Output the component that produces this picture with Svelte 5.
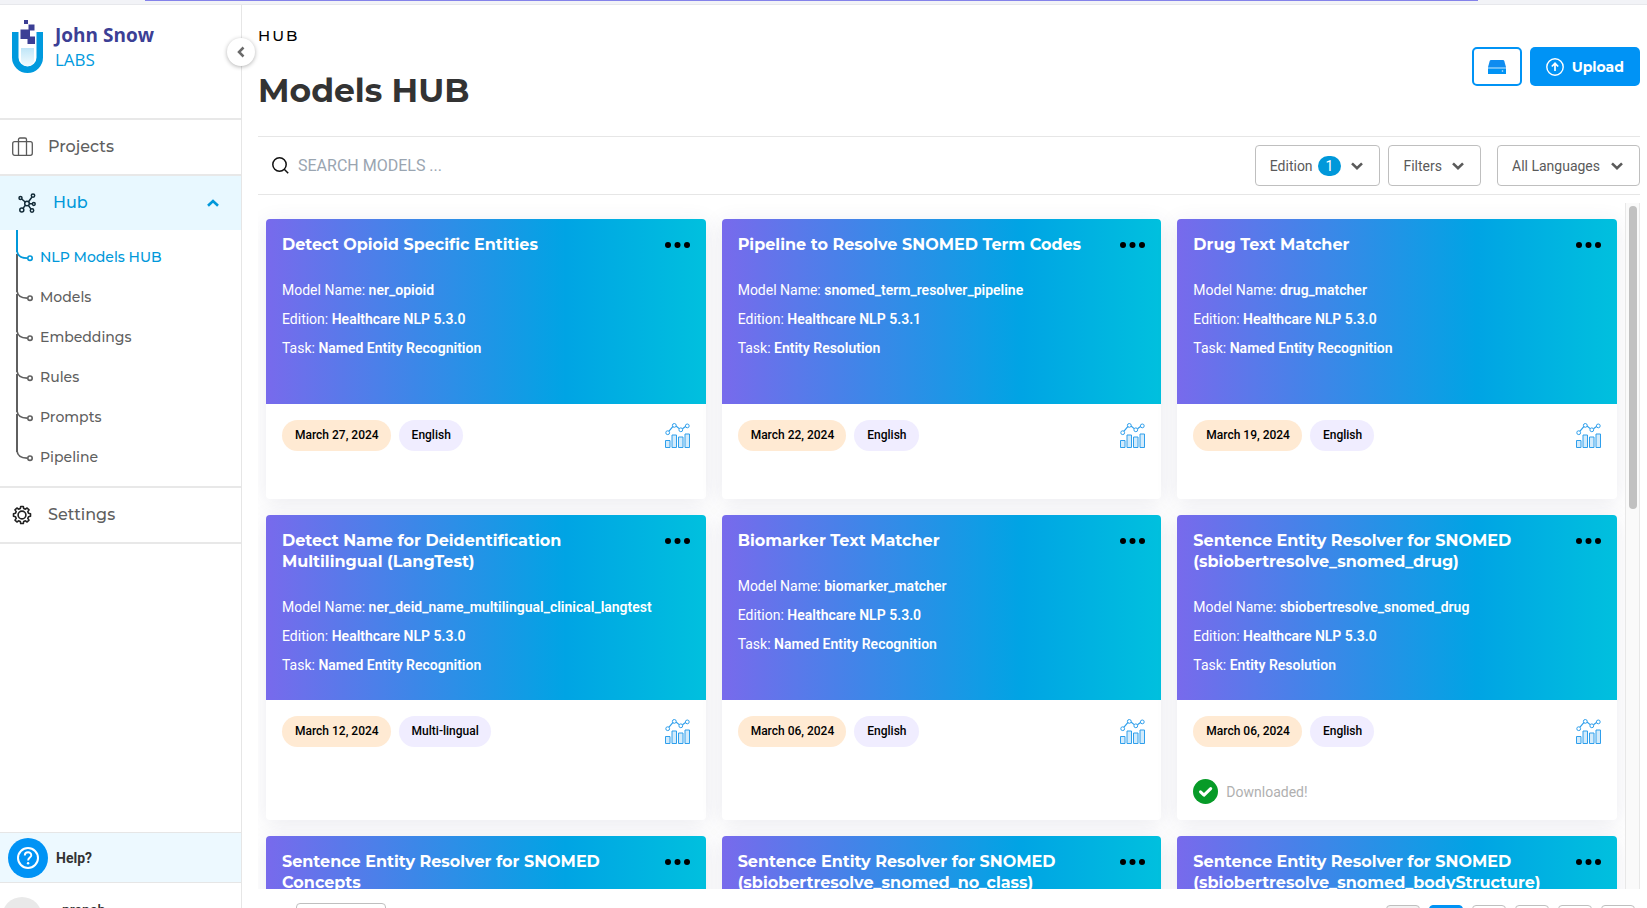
<script>
  const subItems = ['NLP Models HUB', 'Models', 'Embeddings', 'Rules', 'Prompts', 'Pipeline'];
  const NER = 'Named Entity Recognition';
  const cards = [
    { title: 'Detect Opioid Specific Entities', name: 'ner_opioid', edition: 'Healthcare NLP 5.3.0', task: NER, date: 'March 27, 2024', lang: 'English' },
    { title: 'Pipeline to Resolve SNOMED Term Codes', name: 'snomed_term_resolver_pipeline', edition: 'Healthcare NLP 5.3.1', task: 'Entity Resolution', date: 'March 22, 2024', lang: 'English' },
    { title: 'Drug Text Matcher', name: 'drug_matcher', edition: 'Healthcare NLP 5.3.0', task: NER, date: 'March 19, 2024', lang: 'English' },
    { title: 'Detect Name for Deidentification Multilingual (LangTest)', name: 'ner_deid_name_multilingual_clinical_langtest', edition: 'Healthcare NLP 5.3.0', task: NER, date: 'March 12, 2024', lang: 'Multi-lingual' },
    { title: 'Biomarker Text Matcher', name: 'biomarker_matcher', edition: 'Healthcare NLP 5.3.0', task: NER, date: 'March 06, 2024', lang: 'English' },
    { title: 'Sentence Entity Resolver for SNOMED (sbiobertresolve_snomed_drug)', name: 'sbiobertresolve_snomed_drug', edition: 'Healthcare NLP 5.3.0', task: 'Entity Resolution', date: 'March 06, 2024', lang: 'English', downloaded: true },
    { title: 'Sentence Entity Resolver for SNOMED Concepts' },
    { title: 'Sentence Entity Resolver for SNOMED (sbiobertresolve_snomed_no_class)' },
    { title: 'Sentence Entity Resolver for SNOMED (sbiobertresolve_snomed_bodyStructure)' }
  ];
  const pages = [1, 2, 3, 4, 5, 6];
</script>

{#snippet chevron()}
  <svg class="chev" width="12" height="8" viewBox="0 0 12 8" fill="none" stroke="currentColor" stroke-width="2.600" aria-hidden="true"><path d="M1 1.400 6 6.200l5-4.800" /></svg>
{/snippet}

<div class="page">
  <div class="strip"><div class="progress"></div></div>
  <div class="shell">
    <aside>
      <div class="brand">
        <svg width="31" height="54" viewBox="0 0 31 54" aria-hidden="true">
          <defs><linearGradient id="liquid" x1="0" y1="0" x2="0" y2="1"><stop offset="0" stop-color="#bfe6f8" /><stop offset="1" stop-color="#f4fbfe" /></linearGradient></defs>
          <path d="M0 12h6.500v25.500a9 9 0 0 0 18 0V12H31v25.500a15.500 15.500 0 0 1-31 0z" fill="#009ade" />
          <path d="M9 28h13v11.500c0 4-3 6.500-6.500 6.500S9 43.500 9 39.500z" fill="url(#liquid)" />
          <g fill="#3c3f95"><path d="M12 0h4v4h-4zM16.500 4.500h6v6h-6zM8.500 9.500H18v9.500H8.500zM15.500 16.500H23V24h-7.500z" /></g>
        </svg>
        <div class="wordmark"><strong>John Snow</strong><span>LABS</span></div>
      </div>
      <button class="collapse" aria-label="Collapse sidebar">
        <svg width="8" height="12" viewBox="0 0 8 12" fill="none" stroke="#6a6a6a" stroke-width="2.500"><path d="M6.500 1.500 2 6l4.500 4.500" /></svg>
      </button>
      <nav>
        <a class="item" href="#projects">
          <svg width="21" height="20" viewBox="0 0 21 20" fill="none" stroke="#5a5a5a" stroke-width="1.300" aria-hidden="true"><rect x=".7" y="4.700" width="19.600" height="13.600" rx="2" /><path d="M6.500 18V2.500A1.500 1.500 0 0 1 8 1h5a1.500 1.500 0 0 1 1.500 1.500V18" /></svg>
          <span>Projects</span>
        </a>
        <a class="item active" href="#hub">
          <svg width="18" height="20" viewBox="0 0 18 20" fill="none" stroke="#122b38" stroke-width="1.500" aria-hidden="true">
            <circle cx="9" cy="10.500" r="2.300" /><circle cx="2.500" cy="5" r="1.500" /><circle cx="15" cy="2.600" r="1.700" /><circle cx="15.800" cy="11" r="1.400" /><circle cx="3.800" cy="17" r="2" /><circle cx="14" cy="17.500" r="1.700" />
            <path d="M3.700 6 7.200 9M14 4l-3.500 4.700M11.300 10.700h3M7.400 12.200 5 15.400M10.400 12.400l2.600 3.700" />
          </svg>
          <span>Hub</span>
          <svg class="up" width="12" height="8" viewBox="0 0 12 8" fill="none" stroke="#0098da" stroke-width="2.600" aria-hidden="true"><path d="M1 6.800 6 2l5 4.800" /></svg>
        </a>
        <ul>
          {#each subItems as item, i}
            <li class:current={i === 0}>
              <svg width="17" height="40" viewBox="0 0 17 40" fill="none" stroke="currentColor" aria-hidden="true">
                {#if i < subItems.length - 1}<path stroke="#5f5f5f" stroke-width="2" d="M1 24V40" />{/if}
                <path stroke-width="2" d="M1 0V22" /><path stroke-width="1.700" d="M1 21c.5 4 3 7 10 7.200" /><circle cx="14" cy="28.200" r="2.200" stroke-width="1.600" />
              </svg>
              <a href="#{item}">{item}</a>
            </li>
          {/each}
        </ul>
        <a class="item settings" href="#settings">
          <svg width="22" height="22" viewBox="0 0 22 22" fill="none" stroke="#222" stroke-width="1.600" stroke-linejoin="round" aria-hidden="true">
            <circle cx="11" cy="11" r="3.900" />
            <path d="M9.300 3.500 9.700 1.500h2.600l.4 2 1.700.7 1.700-1.200 1.900 1.900-1.200 1.700.7 1.700 2 .4v2.600l-2 .4-.7 1.700 1.200 1.700-1.900 1.900-1.700-1.200-1.700.7-.4 2H9.700l-.4-2-1.700-.7-1.700 1.200L4 15.100l1.200-1.700-.7-1.700-2-.4V8.700l2-.4.7-1.700L4 4.900 5.900 3l1.700 1.200z" transform="translate(0 1)" />
          </svg>
          <span>Settings</span>
        </a>
      </nav>
      <a class="help" href="#help">
        <svg width="40" height="40" viewBox="0 0 40 40" fill="none" aria-hidden="true"><circle cx="20" cy="20" r="20" fill="#0093f5" /><circle cx="20" cy="20" r="10" stroke="#fff" stroke-width="2" /><path d="M16.800 17.500c0-4.300 6.500-4.200 6.500-.3 0 2.300-3.200 2.500-3.200 5.300" stroke="#fff" stroke-width="1.900" /><circle cx="20.100" cy="25.200" r="1.200" fill="#fff" /></svg>
        <span>Help?</span>
      </a>
      <div class="user"><span class="avatar"></span><span>pranab</span></div>
    </aside>

    <main>
      <header>
        <div><p class="crumb">HUB</p><h1>Models HUB</h1></div>
        <div class="actions">
          <button class="drive" aria-label="Storage">
            <svg width="18" height="14" viewBox="0 0 18 14" aria-hidden="true"><path d="M3 0h12q1 0 1.300 1L18 7.200H0L1.700 1Q2 0 3 0z" fill="#0f8cf0" /><path d="M0 8.500h18V14H0z" fill="#0093f5" /><path d="M0 7.200h18v1.400H0z" fill="#58b4f5" /><circle cx="14.500" cy="11" r=".8" fill="#d5ecfd" /></svg>
          </button>
          <button class="upload">
            <svg width="18" height="18" viewBox="0 0 18 18" fill="none" stroke="#fff" aria-hidden="true"><circle cx="9" cy="9" r="8.200" stroke-width="1.400" /><path d="M9 13V5.500M5.800 8.500 9 5.300l3.200 3.200" stroke-width="1.700" /></svg>
            Upload
          </button>
        </div>
      </header>

      <div class="toolbar">
        <label class="search">
          <svg width="17" height="17" viewBox="0 0 17 17" fill="none" stroke="#111" stroke-width="1.500" aria-hidden="true"><circle cx="7.500" cy="7.500" r="6.700" /><path d="m12.200 12.200 4 4" /></svg>
          <input type="text" placeholder="SEARCH MODELS ..." aria-label="Search models" />
        </label>
        <button class="drop">Edition <span class="count">1</span>{@render chevron()}</button>
        <button class="drop">Filters{@render chevron()}</button>
        <div class="drop lang">
          <select aria-label="Language"><option>All Languages</option></select>{@render chevron()}
        </div>
      </div>

      <div class="results">
        <div class="grid">
          {#each cards as card}
            <article>
              <div class="top">
                <div class="heading">
                  <h2>{card.title}</h2>
                  <button class="more" aria-label="More options"><svg width="25" height="6" viewBox="0 0 25 6"><circle cx="3" cy="3" r="3" /><circle cx="12.500" cy="3" r="3" /><circle cx="22" cy="3" r="3" /></svg></button>
                </div>
                {#if card.name}
                  <p>Model Name: <b>{card.name}</b></p>
                  <p>Edition: <b>{card.edition}</b></p>
                  <p>Task: <b>{card.task}</b></p>
                {/if}
              </div>
              {#if card.name}
                <div class="bottom">
                  <div class="tags">
                    <span class="tag date">{card.date}</span><span class="tag">{card.lang}</span>
                    <svg class="chart" width="25" height="25" viewBox="0 1 25 25" fill="none" stroke="#2f9fec" aria-hidden="true">
                      <path d="M4 9.200 8 4.300M11 4l3.200 2.600M17.500 6.700l3-2.200" stroke-width="1.200" />
                      <circle cx="2.700" cy="10.700" r="1.900" /><circle cx="9.300" cy="3.400" r="1.900" /><circle cx="15.800" cy="7.800" r="1.900" /><circle cx="22.300" cy="3.900" r="1.900" />
                      <g fill="#d3ebfb"><path d="M.5 18.500h4.500v7H.5zM7 13h4.500v12.500H7zM13.500 15H18v10.500h-4.500zM20 12h4.500v13.500H20z" /></g>
                    </svg>
                  </div>
                  {#if card.downloaded}
                    <div class="done"><svg width="25" height="25" viewBox="0 0 25 25" fill="none" aria-hidden="true"><circle cx="12.500" cy="12.500" r="12.500" fill="#079b28" /><path d="m7.500 12.800 3.500 3.300 6.700-6.500" stroke="#fff" stroke-width="3" stroke-linecap="round" stroke-linejoin="round" /></svg>Downloaded!</div>
                  {/if}
                </div>
              {/if}
            </article>
          {/each}
        </div>
        <div class="track"><div class="thumb"></div></div>
      </div>

      <footer>
        <select aria-label="Page size"><option></option></select>
        <div class="pager">{#each pages as p}<button class:on={p === 2} class:off={p === 1} aria-label="Page button {p}"></button>{/each}</div>
      </footer>
    </main>
  </div>
</div>

<style>
  :global(body) { margin: 0; background: #fff; }
  * { box-sizing: border-box; }
  .page { height: 100vh; display: flex; flex-direction: column; overflow: hidden; font-family: Roboto, sans-serif; color: #333; }
  .strip { flex: none; height: 5px; background: #f2f3f7; border-bottom: 1px solid #e7e8ec; }
  .progress { height: 1px; margin: 0 169px 0 145px; background: #8482ea; }
  .shell { flex: 1; min-height: 0; display: flex; }
  button, select, input { font: inherit; color: inherit; margin: 0; padding: 0; border: 0; background: none; }
  button { display: flex; align-items: center; justify-content: center; cursor: pointer; }
  a { color: inherit; text-decoration: none; }
  svg { display: block; flex: none; }
  h1, h2, p, ul { margin: 0; padding: 0; }

  aside { position: relative; flex: none; width: 242px; border-right: 1px solid #e6e6e6; display: flex; flex-direction: column; }
  .brand { flex: none; height: 113px; padding: 15px 12px; display: flex; gap: 12px; }
  .wordmark { display: flex; flex-direction: column; padding-top: 3px; font-family: "Open Sans", sans-serif; }
  .wordmark strong { font-size: 19px; line-height: 25px; font-weight: 700; color: #3c3f95; }
  .wordmark span { font-size: 17px; line-height: 23px; color: #009ade; }
  .collapse { position: absolute; right: -14px; top: 33px; width: 28px; height: 28px; border-radius: 50%; background: #fff; box-shadow: 0 1px 4px rgba(0, 0, 0, .3); z-index: 2; }
  nav { flex: 1; min-height: 0; overflow: hidden; }
  .item { display: flex; align-items: center; gap: 15px; height: 56px; padding: 0 22px 1px 12px; border-top: 2px solid #e8e8e8; font-family: Montserrat, Inter, sans-serif; font-size: 16px; font-weight: 500; color: #5f5f5f; }
  .active { background: #e8f8ff; padding-left: 18px; gap: 17px; color: #0098da; }
  .up { margin-left: auto; }
  ul { list-style: none; padding-bottom: 16px; }
  li { display: flex; gap: 7px; height: 40px; padding-left: 16px; color: #5f5f5f; font-family: Montserrat, Inter, sans-serif; font-size: 14px; font-weight: 500; line-height: 54px; }
  li.current { color: #0098da; }
  .settings { border-bottom: 2px solid #e8e8e8; height: 58px; padding-left: 11px; }
  .help { flex: none; display: flex; align-items: center; gap: 8px; height: 51px; padding-left: 8px; background: #edf9ff; border: solid #e6e6e6; border-width: 1px 0; font-size: 14px; font-weight: 700; }
  .user { flex: none; height: 25px; overflow: hidden; padding: 14px 0 0 2px; display: flex; gap: 20px; font-size: 14px; font-weight: 500; line-height: 26px; }
  .avatar { flex: none; width: 40px; height: 40px; border-radius: 50%; background: #e9e9e9; }

  main { flex: 1; min-width: 0; display: flex; flex-direction: column; padding: 0 7px 0 16px; }
  header { flex: none; height: 131px; display: flex; justify-content: space-between; align-items: flex-start; }
  .crumb { padding-top: 20px; font: 500 15px/22px Montserrat, Inter, sans-serif; letter-spacing: 2px; color: #000; }
  h1 { padding-top: 22px; font: 700 33px/42px Montserrat, Inter, sans-serif; }
  .actions { display: flex; gap: 8px; padding-top: 42px; }
  .drive { width: 50px; height: 39px; border: 2px solid #0093f5; border-radius: 5px; }
  .upload { height: 39px; padding: 0 16px; gap: 8px; border-radius: 5px; background: #0093f5; color: #fff; font: 700 14px Montserrat, Inter, sans-serif; }
  .toolbar { flex: none; display: flex; align-items: center; gap: 8px; height: 59px; border: solid #e6e6e6; border-width: 1px 0; color: #5a5a5a; font-size: 14px; }
  .search { flex: 1; display: flex; align-items: center; gap: 9px; padding-left: 14px; }
  .search input { flex: 1; font-size: 16px; outline: 0; }
  .search input::placeholder { color: #9aa5b1; opacity: 1; }
  .drop { display: flex; align-items: center; height: 41px; padding: 0 16px 0 14px; gap: 10px; border: 1px solid #bfbfbf; border-radius: 4px; }
  .count { height: 20px; padding: 0 8px; border-radius: 10px; background: #0098da; color: #fff; line-height: 20px; margin-left: -5px; }
  .lang { margin-left: 8px; }
  .lang select { appearance: none; outline: 0; }

  .results { flex: 1; min-height: 0; margin-top: 8px; display: flex; overflow: hidden; }
  .grid { flex: 1; display: grid; grid-template-columns: repeat(3, minmax(0, 1fr)); gap: 16px; padding: 16px 8px; align-content: start; overflow: hidden; }
  article { display: flex; flex-direction: column; border-radius: 4px; background: #fff; box-shadow: 0 4px 22px rgba(60, 60, 110, .1); }
  .top { min-height: 185px; padding: 15px 16px 12px; border-radius: 4px 4px 0 0; background: linear-gradient(90deg, #786aec, #00a4e4 68%, #00c0de); color: #fff; font-size: 14px; line-height: 29px; }
  .heading { display: flex; align-items: flex-start; justify-content: space-between; gap: 16px; margin-bottom: 21px; }
  h2 { font: 700 16px/21px Montserrat, Inter, sans-serif; }
  .more { height: 21px; color: #000; }
  b { font-weight: 600; }
  .bottom { flex: 1; padding: 16px; min-height: 95px; }
  .tags { display: flex; gap: 8px; align-items: center; }
  .tag { height: 31px; padding: 0 12px 0 13px; border-radius: 16px; background: #f0edff; color: #000; font-size: 12px; font-weight: 500; line-height: 31px; }
  .date { background: #ffead3; }
  .chart { margin-left: auto; }
  .done { display: flex; align-items: center; gap: 8px; margin-top: 32px; color: #b0b0b0; font-size: 14px; line-height: 24px; }
  .track { flex: none; width: 15px; padding: 3px 2px 0 3px; background: #fafafa; border: solid #e8e8e8; border-width: 0 1px; }
  .thumb { width: 8px; height: 44.3%; border-radius: 4px; background: #c1c1c1; }

  footer { flex: none; height: 19px; overflow: hidden; padding: 14px 0 0 38px; display: flex; justify-content: space-between; align-items: flex-start; }
  footer select { appearance: none; width: 90px; height: 32px; border: 1px solid #bfbfbf; border-radius: 4px; }
  .pager { display: flex; gap: 9px; padding: 2px 5px 0 0; }
  .pager button { width: 34px; height: 34px; border: 1px solid #bfbfbf; border-radius: 4px; background: #fff; }
  .pager .off { background: #f2f2f2; }
  .pager .on { background: #0093f5; border-color: #0093f5; }
</style>
